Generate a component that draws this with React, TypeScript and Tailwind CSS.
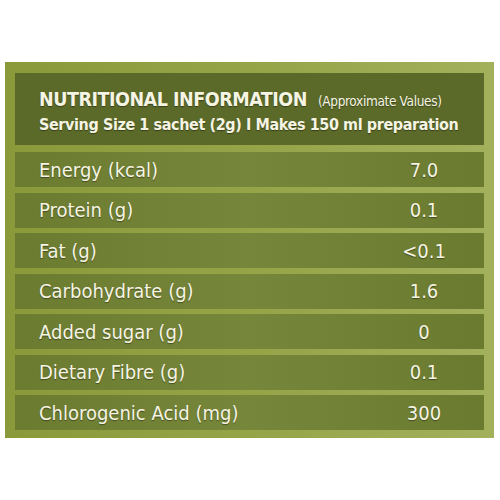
import React from 'react';

const rows: [string, string][] = [
  ['Energy (kcal)', '7.0'],
  ['Protein (g)', '0.1'],
  ['Fat (g)', '<0.1'],
  ['Carbohydrate (g)', '1.6'],
  ['Added sugar (g)', '0'],
  ['Dietary Fibre (g)', '0.1'],
  ['Chlorogenic Acid (mg)', '300'],
];

const font = { fontFamily: '"Liberation Sans Narrow", "DejaVu Sans Condensed", "Open Sans", sans-serif' };

const App: React.FC = () => {
  return (
    <div className="w-[500px] h-[500px] bg-white pt-[62px] pl-[5px]" style={font}>
      <div className="w-[489px] h-[376px] bg-gradient-to-r from-[#8a9a3a] via-[#95a447] to-[#a3b05c] pt-[11px] pl-[10px] pr-[10px] flex flex-col">
        <div className="h-[72px] bg-[#5b6a29] pl-[24px] pt-[15px] text-[#f6f4e2] [text-shadow:0_1px_1px_rgba(0,0,0,0.4)]">
          <div className="flex items-baseline gap-[11px] whitespace-nowrap">
            <span className="text-[19.5px] font-bold leading-[24px] tracking-tight">NUTRITIONAL INFORMATION</span>
            <span className="text-[13.5px] leading-[24px] tracking-tight">(Approximate Values)</span>
          </div>
          <div className="text-[16px] font-bold leading-[24px] tracking-tight whitespace-nowrap">
            Serving Size 1 sachet (2g) I Makes 150 ml preparation
          </div>
        </div>
        <div className="mt-[7px] flex flex-col gap-[5.5px]">
          {rows.map(([label, value]) => (
            <div
              key={label}
              className="h-[35px] flex items-center bg-gradient-to-r from-[#6b7b2f] via-[#76863a] to-[#6a7a2e] text-[#f6f4e2] text-[20px] [text-shadow:0_1px_1px_rgba(0,0,0,0.4)]"
            >
              <span className="flex-1 pl-[24px]">{label}</span>
              <span className="w-[100px] mr-[10px] text-center">{value}</span>
            </div>
          ))}
        </div>
      </div>
    </div>
  );
};

export default App;
